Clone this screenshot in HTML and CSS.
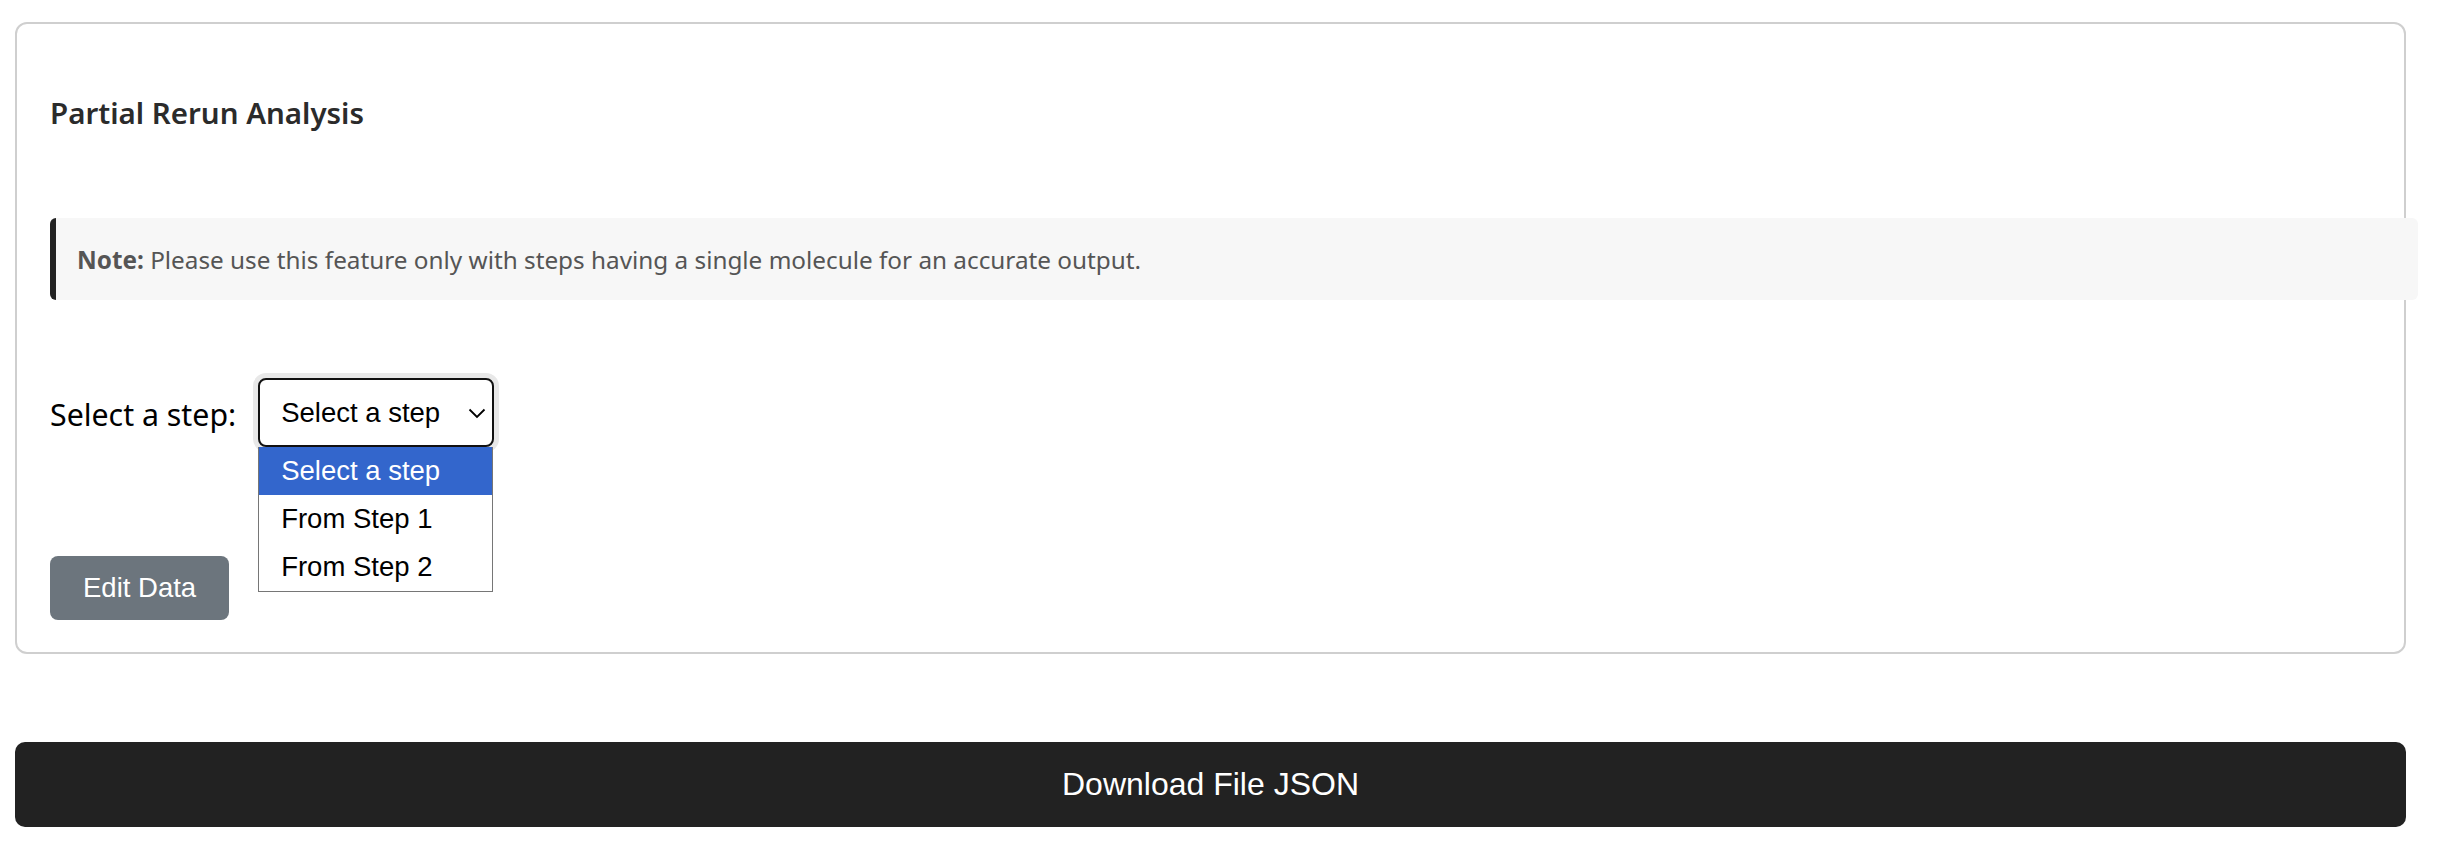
FILE: index.html
```html
<!DOCTYPE html>
<html lang="en">
<head>
<meta charset="utf-8">
<title>Partial Rerun Analysis</title>
<link rel="stylesheet" href="styles.css">
</head>
<body>
<main class="page">
  <section class="card">
    <h3 class="card-title">Partial Rerun Analysis</h3>
    <div class="note"><strong>Note:</strong> Please use this feature only with steps having a single molecule for an accurate output.</div>
    <div class="step-row">
      <label class="step-label">Select a step:</label>
      <div class="select-wrap">
        <div class="select-box">
          <span class="select-value">Select a step</span>
          <svg class="chevron" width="18" height="11" viewBox="0 0 18 11"><polyline points="1.5,1.5 9,9 16.5,1.5" fill="none" stroke="#000" stroke-width="1.8"/></svg>
        </div>
        <ul class="dropdown">
          <li class="option selected">Select a step</li>
          <li class="option">From Step 1</li>
          <li class="option">From Step 2</li>
        </ul>
      </div>
    </div>
    <button class="btn-edit">Edit Data</button>
  </section>
  <button class="btn-download">Download File JSON</button>
</main>
</body>
</html>
```
FILE: styles.css
```css
* { box-sizing: border-box; }
html, body { margin: 0; background: #fff; }
body {
  font-family: "Noto Sans", "Open Sans", sans-serif;
  color: #212529;
}
.page {
  padding: 22px 32px 14px 15px;
  display: flex;
  flex-direction: column;
}
.card {
  border: 2px solid #cfcfcf;
  border-radius: 12px;
  padding: 71px 33px 32px 33px;
  display: flex;
  flex-direction: column;
  align-items: flex-start;
}
.card-title {
  margin: 0;
  font-size: 29.5px;
  font-weight: 600;
  line-height: 36px;
  color: #2b2b2b;
}
.note {
  box-sizing: content-box;
  width: 100%;
  margin-top: 87px;
  background: #f7f7f7;
  border-left: 6px solid #222;
  border-radius: 6px;
  padding: 24px 20px 22px 21px;
  font-size: 24.3px;
  line-height: 36px;
  color: #555;
}
.note strong { font-weight: 700; }
.step-row {
  margin-top: 78px;
  display: flex;
  align-items: center;
  gap: 22px;
}
.step-label {
  font-size: 30.3px;
  color: #000;
  line-height: 40px;
  padding-top: 4px;
}
.select-wrap { position: relative; }
.select-box {
  width: 236px;
  height: 69px;
  border: 2px solid #111;
  border-radius: 8px;
  box-shadow: 0 0 0 5px #e8e8e8;
  background: #fff;
  display: flex;
  align-items: center;
  justify-content: space-between;
  padding: 0 6px 0 21px;
  font-family: "Liberation Sans", Arial, sans-serif;
  font-size: 27.5px;
  color: #000;
}
.chevron { margin-top: 2px; }
.dropdown {
  position: absolute;
  top: 100%;
  left: 0;
  width: 235px;
  margin: 0;
  padding: 0;
  list-style: none;
  background: #fff;
  border: 1px solid #767676;
  border-top: 0;
  font-family: "Liberation Sans", Arial, sans-serif;
  font-size: 27.5px;
  color: #000;
  z-index: 2;
}
.option {
  height: 48px;
  line-height: 48px;
  padding-left: 22px;
}
.option.selected { background: #3366cc; color: #fff; }
.btn-edit {
  margin-top: 109px;
  height: 64px;
  padding: 0 33px;
  border: 0;
  border-radius: 8px;
  background: #6c757d;
  color: #fff;
  font-family: "Liberation Sans", Arial, sans-serif;
  font-size: 27.5px;
}
.btn-download {
  margin-top: 88px;
  height: 85px;
  width: 100%;
  border: 0;
  border-radius: 10px;
  background: #222;
  color: #fff;
  font-family: "Liberation Sans", Arial, sans-serif;
  font-size: 32px;
}
```
